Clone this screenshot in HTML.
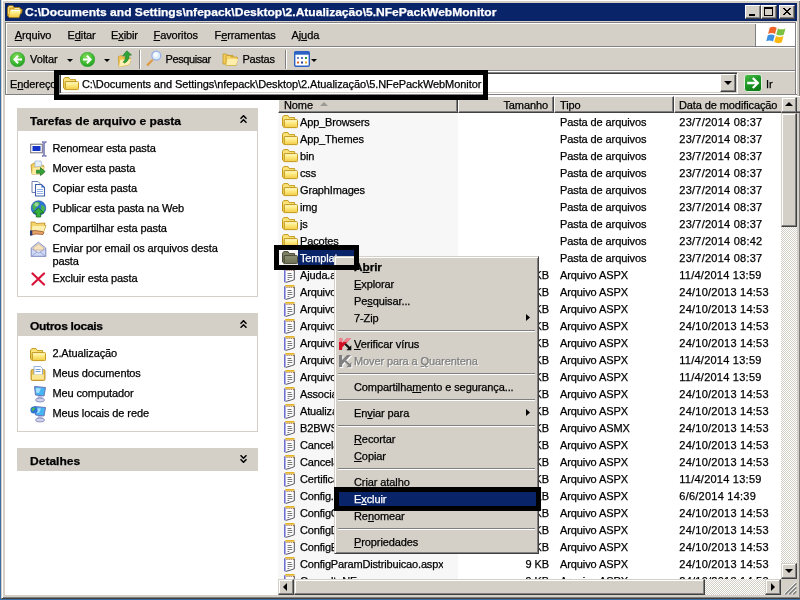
<!DOCTYPE html>
<html><head><meta charset="utf-8"><title>5.NFePackWebMonitor</title>
<style>
html,body{margin:0;padding:0}
body{width:800px;height:600px;overflow:hidden;background:#3a6ea5;position:relative;
 font-family:"Liberation Sans",sans-serif;font-size:11px;color:#000;letter-spacing:-0.1px;-webkit-text-stroke:0.25px}
div,span{box-sizing:border-box}
.a{position:absolute}
.t{position:absolute;white-space:nowrap;line-height:17px;height:17px}
u{text-decoration:underline;text-underline-offset:1px}
.face{background:#d4d0c8}
.btn{position:absolute;background:#d4d0c8;border:1px solid;border-color:#fff #404040 #404040 #fff;box-shadow:inset -1px -1px 0 #808080, inset 1px 1px 0 #d4d0c8}
.sbtn{position:absolute;background:#d4d0c8;border:1px solid;border-color:#d4d0c8 #404040 #404040 #d4d0c8;box-shadow:inset -1px -1px 0 #808080, inset 1px 1px 0 #fff}
.track{position:absolute;background:#eae8e3;background-image:conic-gradient(#fff 25%,#d4d0c8 0 50%,#fff 0 75%,#d4d0c8 0);background-size:2px 2px}
.hd{position:absolute;top:96px;height:17px;background:#d4d0c8;border:1px solid;border-color:#fff #404040 #404040 #fff;box-shadow:inset -1px -1px 0 #808080}
.hd span{position:absolute;top:0px;line-height:17px;white-space:nowrap}
.ph{position:absolute;left:17px;width:241px;height:23px;background:#d4d0c8;font-weight:bold}
.ph span{position:absolute;left:13px;top:5px;transform:scaleX(1.095);transform-origin:0 0;line-height:17px;white-space:nowrap;letter-spacing:0}
.pb{position:absolute;left:17px;width:241px;border:1px solid #d4d0c8;border-top:none;background:#fff}
.mi{position:absolute;left:3px;width:199px;height:17px;line-height:17px;white-space:nowrap;padding-left:16px}
.sep{position:absolute;left:3px;width:197px;height:2px;border-top:1px solid #808080;border-bottom:1px solid #fff}
.row{position:absolute;left:278px;width:503px;height:17px;line-height:17px;white-space:nowrap}
.row span{position:absolute;top:0}
.row svg{position:absolute}
.nm{left:22px;max-width:158px;overflow:hidden;letter-spacing:-0.16px}
.sz{right:232px;text-align:right}
.tp{left:282px}
.dt{left:401.3px;letter-spacing:0.24px}
</style></head>
<body>
<div id="w" class="a" style="left:0;top:0;width:800px;height:600px;will-change:transform">
<svg class="a" width="0" height="0" style="left:0;top:0"><defs><linearGradient id="fg" x1="0" y1="0" x2="0" y2="1"><stop offset="0" stop-color="#fffbd6"/><stop offset=".35" stop-color="#ffee8c"/><stop offset="1" stop-color="#f2cb45"/></linearGradient><linearGradient id="fgd" x1="0" y1="0" x2="0" y2="1"><stop offset="0" stop-color="#8f9274"/><stop offset="1" stop-color="#6c6f52"/></linearGradient><radialGradient id="gc" cx=".42" cy=".32" r=".75"><stop offset="0" stop-color="#86dc5e"/><stop offset=".6" stop-color="#3fba30"/><stop offset="1" stop-color="#1d9620"/></radialGradient></defs></svg>
<div class="a" style="left:1px;top:-1px;width:800px;height:600px;background:#d4d0c8;border:1px solid;border-color:#d4d0c8 #404040 #404040 #d4d0c8;box-shadow:inset 1px 1px 0 #fff, inset -1px -1px 0 #808080"></div>
<div class="a" style="left:5px;top:3px;width:792px;height:18px;background:#0a246a"></div>
<svg class="a" style="left:7px;top:5px" width="16" height="14" viewBox="0 0 16 14"><path d="M.6 3 L1.6 .8 L6 .8 L7.2 2.6 L12.8 2.6 L13.6 4 L15.2 4.6 L14.6 8.2 L13.4 8.6 L12 12.6 L2.2 12.6 L.6 10.6 Z" fill="#dda822" stroke="#b98a10" stroke-width=".7" stroke-linejoin="round"/><path d="M1.6 2 L1.6 9" stroke="#f7dc78" stroke-width="1.2"/><path d="M2 1.8 H5.8" stroke="#fff4c4" stroke-width="1"/><path d="M7.6 3.5 H12.4" stroke="#fff4c4" stroke-width=".9"/><path d="M3.6 4.8 L13.4 4.8 L13.2 8 L11.7 12 L2 12 L2.8 8 Z" fill="url(#fg)"/><path d="M4 5.3 H13" stroke="#fff" stroke-width="1" opacity=".9"/></svg>
<div class="t" style="left:25px;top:4px;color:#fff;font-weight:bold;letter-spacing:0;transform:scaleX(1.096);transform-origin:0 0" id="ttl">C:\Documents and Settings\nfepack\Desktop\2.Atualização\5.NFePackWebMonitor</div>
<div class="btn" style="left:745px;top:5px;width:16px;height:14px"><div class="a" style="left:3px;top:8px;width:6px;height:2px;background:#000"></div></div>
<div class="btn" style="left:761px;top:5px;width:16px;height:14px"><div class="a" style="left:2px;top:1px;width:9px;height:9px;border:1px solid #000;border-top-width:2px"></div></div>
<div class="btn" style="left:779px;top:5px;width:16px;height:14px"><svg class="a" style="left:3px;top:2px" width="8" height="7" viewBox="0 0 8 7"><path d="M0 0 L7 7 M1 0 L8 7 M7 0 L0 7 M8 0 L1 7" stroke="#000" stroke-width="1" shape-rendering="crispEdges" fill="none"/></svg></div>
<div class="a" style="left:5px;top:22px;width:792px;height:1px;background:#808080"></div>
<div class="a" style="left:5px;top:23px;width:792px;height:1px;background:#fff"></div>
<div class="a" style="left:5px;top:22px;width:1px;height:73px;background:#808080"></div>
<div class="a" style="left:6px;top:23px;width:1px;height:72px;background:#fff"></div>
<div class="a" style="left:795px;top:23px;width:1px;height:72px;background:#808080"></div>
<div class="a" style="left:796px;top:22px;width:1px;height:74px;background:#fff"></div>
<div class="a" style="left:7px;top:46px;width:788px;height:1px;background:#808080"></div>
<div class="a" style="left:7px;top:47px;width:788px;height:1px;background:#fff"></div>
<div class="a" style="left:7px;top:70px;width:788px;height:1px;background:#808080"></div>
<div class="a" style="left:7px;top:71px;width:788px;height:1px;background:#fff"></div>
<div class="a" style="left:5px;top:94px;width:792px;height:1px;background:#808080"></div>
<div class="a" style="left:5px;top:95px;width:792px;height:1px;background:#fff"></div>
<div class="t" style="left:14.7px;top:27px"><u>A</u>rquivo</div>
<div class="t" style="left:67.5px;top:27px">E<u>d</u>itar</div>
<div class="t" style="left:111px;top:27px">E<u>x</u>ibir</div>
<div class="t" style="left:153.5px;top:27px"><u>F</u>avoritos</div>
<div class="t" style="left:214.5px;top:27px">F<u>e</u>rramentas</div>
<div class="t" style="left:291.5px;top:27px">Aj<u>u</u>da</div>
<div class="a" style="left:755px;top:24px;width:1px;height:22px;background:#808080"></div>
<div class="a" style="left:756px;top:24px;width:39px;height:22px;background:#fff"></div>
<svg class="a" style="left:766px;top:25px" width="23" height="21" viewBox="0 0 22 20"><path d="M3.5 2.5 Q7 .5 10.2 2.6 L8.6 8.6 Q5.6 6.8 2 8.6 Z" fill="#f2652a"/><path d="M11.4 3.2 Q14.6 5 18.6 3.2 L17 9.2 Q13.4 10.8 9.8 9 Z" fill="#7cc142"/><path d="M1.7 9.8 Q5.2 8 8.3 9.9 L6.7 15.8 Q3.6 13.9 .2 15.6 Z" fill="#3d8fe0"/><path d="M9.5 10.4 Q13 12.3 16.7 10.5 L15.1 16.5 Q11.4 18.2 7.9 16.3 Z" fill="#fbb811"/></svg>
<svg class="a" style="left:10px;top:52px" width="15" height="15" viewBox="0 0 15 15"><circle cx="7.5" cy="7.5" r="7.3" fill="url(#gc)" stroke="#27a024" stroke-width=".5"/><path d="M3 7.5 L7.4 3.1 L8.8 4.5 L6.9 6.4 L12 6.4 L12 8.6 L6.9 8.6 L8.8 10.5 L7.4 11.9 Z" fill="#fff"/></svg>
<div class="t" style="left:30px;top:51px">Voltar</div>
<div class="a" style="left:67px;top:59px;width:0;height:0;border:3px solid transparent;border-top:3px solid #000;border-bottom:none"></div>
<svg class="a" style="left:79.5px;top:52px" width="15" height="15" viewBox="0 0 15 15"><circle cx="7.5" cy="7.5" r="7.3" fill="url(#gc)" stroke="#27a024" stroke-width=".5"/><path d="M3 7.5 L7.4 3.1 L8.8 4.5 L6.9 6.4 L12 6.4 L12 8.6 L6.9 8.6 L8.8 10.5 L7.4 11.9 Z" fill="#fff" transform="translate(15,0) scale(-1,1)"/></svg>
<div class="a" style="left:104px;top:59px;width:0;height:0;border:3px solid transparent;border-top:3px solid #000;border-bottom:none"></div>
<svg class="a" style="left:117px;top:50px" width="16" height="18" viewBox="0 0 16 18"><path d="M1.3 6.6 L4.6 5.4 L6 6.8 L13.6 8.2 L12.6 14.4 L2 17 Z" fill="#eec24f" stroke="#c99a2b" stroke-width=".7"/><path d="M3.4 9.8 L14 9 L12.4 14.6 L2 17 Z" fill="#fdf0b2"/><path d="M9.8 .8 L14.6 5 L12 5.2 Q12.4 10.5 7.6 13 L6.2 12.2 Q9 9.5 8.4 5.6 L5.6 5.9 Z" fill="#2fa336" stroke="#1f7a27" stroke-width=".6"/></svg>
<div class="a" style="left:139px;top:50px;width:1px;height:19px;background:#808080"></div><div class="a" style="left:140px;top:50px;width:1px;height:19px;background:#fff"></div>
<svg class="a" style="left:145px;top:50px" width="17" height="18" viewBox="0 0 17 18"><path d="M7.2 10.3 L2.6 14.9" stroke="#e09a45" stroke-width="2.2" stroke-linecap="round"/><circle cx="11.3" cy="5.6" r="4.5" fill="#d9edfb" stroke="#9db0e6" stroke-width="1.3"/><circle cx="10.6" cy="4.8" r="2.2" fill="#fff" opacity=".85"/></svg>
<div class="t" style="left:165.5px;top:51px;letter-spacing:-0.4px">Pesquisar</div>
<svg class="a" style="left:222px;top:51px" width="17" height="16" viewBox="0 0 17 16"><path d="M1 3 L4.5 3 L5.5 4.4 L11 4.4 L11 13 L1 13 Z" fill="#f2cd59" stroke="#c3972b" stroke-width=".8"/><path d="M4 5.5 Q4 4.5 5 4.5 L8 4.5 L9 6 L15 6 L15.5 7 L14 14.5 L4 14.5 Z" fill="#f6d669" stroke="#c3972b" stroke-width=".8"/><path d="M5.5 8 L16 8 L14 14.2 L4.2 14.2 Z" fill="#fdefab"/></svg>
<div class="t" style="left:242.5px;top:51px;letter-spacing:-0.25px">Pastas</div>
<div class="a" style="left:285px;top:50px;width:1px;height:19px;background:#808080"></div><div class="a" style="left:286px;top:50px;width:1px;height:19px;background:#fff"></div>
<svg class="a" style="left:294px;top:51px" width="16" height="16" viewBox="0 0 16 16"><rect x=".7" y=".7" width="14.6" height="14.6" rx="1.2" fill="#fff" stroke="#2d62c4" stroke-width="1.4"/><rect x=".7" y=".7" width="14.6" height="3" fill="#2d62c4"/><rect x="3" y="6" width="2" height="2" fill="#7a86c8"/><rect x="7" y="6" width="2" height="2" fill="#5a6ab8"/><rect x="11" y="6" width="2" height="2" fill="#2e9a38"/><rect x="3" y="10.5" width="2" height="2" fill="#e0662c"/><rect x="7" y="10.5" width="2" height="2" fill="#2c3e96"/><rect x="11" y="10.5" width="2" height="2" fill="#e0a82c"/></svg>
<div class="a" style="left:311px;top:59px;width:0;height:0;border:3px solid transparent;border-top:3px solid #000;border-bottom:none"></div>
<div class="t" style="left:10px;top:76px">E<u>n</u>dereço</div>
<div class="a" style="left:59px;top:72px;width:679px;height:22px;background:#fff;border:1px solid;border-color:#808080 #fff #fff #808080;box-shadow:inset 1px 1px 0 #404040, inset -1px -1px 0 #d4d0c8"></div>
<svg class="a" style="left:62.8px;top:77px" width="16" height="14" viewBox="0 0 16 14"><path d="M.5 2.2 L1.8 .6 L6 .6 L7.3 2.6 L12.6 2.6 L12.6 4.6 L2.3 4.6 L2.3 12.6 L.5 11 Z" fill="#fbe37a" stroke="#c39a1c" stroke-width="1" stroke-linejoin="round"/><rect x="2.3" y="4.6" width="13.2" height="8" rx=".9" fill="url(#fg)" stroke="#c39a1c" stroke-width="1"/></svg>
<div class="t" style="left:82px;top:76px;letter-spacing:-0.07px" id="addr">C:\Documents and Settings\nfepack\Desktop\2.Atualização\5.NFePackWebMonitor</div>
<div class="btn" style="left:720px;top:74px;width:16px;height:18px"><div class="a" style="left:3px;top:6px;width:0;height:0;border:4px solid transparent;border-top:4px solid #000;border-bottom:none"></div></div>
<svg class="a" style="left:744px;top:74px" width="18" height="18" viewBox="0 0 18 18"><defs><linearGradient id="go" x1="0" y1="0" x2=".6" y2="1"><stop offset="0" stop-color="#4fbf48"/><stop offset=".5" stop-color="#1f9a28"/><stop offset="1" stop-color="#0c7a16"/></linearGradient></defs><rect x=".5" y=".5" width="17" height="17" rx="2.6" fill="url(#go)" stroke="#e4eede" stroke-width="1"/><path d="M3.2 9 L13.6 9 M8.8 4 L13.8 9 L8.8 14" stroke="#fff" stroke-width="2.3" fill="none"/></svg>
<div class="t" style="left:766px;top:76px">Ir</div>
<div class="a" style="left:5px;top:96px;width:792px;height:499px;background:#fff"></div>
<div class="ph" style="top:108px"><span>Tarefas de arquivo e pasta</span></div>
<svg class="a" style="left:240px;top:115px" width="7" height="8" viewBox="0 0 7 8"><path d="M.5 3.7 L3.5 .7 L6.5 3.7 M.5 7.7 L3.5 4.7 L6.5 7.7" stroke="#000" stroke-width="1.5" fill="none"/></svg>
<div class="pb" style="top:131px;height:166px"></div>
<div class="ph" style="top:313px"><span style="letter-spacing:-0.3px">Outros locais</span></div>
<svg class="a" style="left:240px;top:320px" width="7" height="8" viewBox="0 0 7 8"><path d="M.5 3.7 L3.5 .7 L6.5 3.7 M.5 7.7 L3.5 4.7 L6.5 7.7" stroke="#000" stroke-width="1.5" fill="none"/></svg>
<div class="pb" style="top:336px;height:96px"></div>
<div class="ph" style="top:448px"><span>Detalhes</span></div>
<svg class="a" style="left:240px;top:455px" width="7" height="8" viewBox="0 0 7 8"><path d="M.5 .3 L3.5 3.3 L6.5 .3 M.5 4.3 L3.5 7.3 L6.5 4.3" stroke="#000" stroke-width="1.5" fill="none"/></svg>
<div class="t" style="left:52.4px;top:140px">Renomear esta pasta</div>
<div class="t" style="left:52.4px;top:160px">Mover esta pasta</div>
<div class="t" style="left:52.4px;top:180px">Copiar esta pasta</div>
<div class="t" style="left:52.4px;top:200px">Publicar esta pasta na Web</div>
<div class="t" style="left:52.4px;top:220px">Compartilhar esta pasta</div>
<div class="t" style="left:52.4px;top:240px">Enviar por email os arquivos desta</div>
<div class="t" style="left:52.4px;top:253px">pasta</div>
<div class="t" style="left:52.4px;top:270px">Excluir esta pasta</div>
<div class="t" style="left:52.4px;top:345px">2.Atualização</div>
<div class="t" style="left:52.4px;top:365px">Meus documentos</div>
<div class="t" style="left:52.4px;top:385px">Meu computador</div>
<div class="t" style="left:52.4px;top:405px">Meus locais de rede</div>
<svg class="a" style="left:30px;top:141px" width="17" height="16" viewBox="0 0 17 16"><rect x=".7" y="3.2" width="11.6" height="8.6" fill="#fff" stroke="#6b6b7a" stroke-width="1"/><rect x="2.5" y="5" width="8" height="5" fill="#1433c8"/><path d="M12 1 Q14 1 14 2.5 L14 13.5 Q14 15 12 15 M16.5 1 Q14 1 14 2.5 M16.5 15 Q14 15 14 13.5" stroke="#8587bd" stroke-width="1.8" fill="none"/></svg>
<svg class="a" style="left:30px;top:160px" width="17" height="17" viewBox="0 0 17 17"><path d="M1 5 L4 3 L8 3 L14 6 L13 14 L2 14 Z" fill="#f2cf62" stroke="#b88d25" stroke-width=".8"/><path d="M5 1 L11 1 L12 6 L5 7 Z" fill="#e6f0fb" stroke="#9db6d6" stroke-width=".7"/><path d="M3 8 L14 7 L12.5 14 L2 14 Z" fill="#fdeca0"/><path d="M6.5 10.2 L10.5 10.2 L10.5 7.6 L15.2 11.6 L10.5 15.6 L10.5 13.2 L6.5 13.2 Z" fill="#35a43a" stroke="#1d6f24" stroke-width=".7"/></svg>
<svg class="a" style="left:31px;top:180px" width="15" height="17" viewBox="0 0 15 17"><path d="M1 1.5 L7 1.5 L9.5 4 L9.5 12.5 L1 12.5 Z" fill="#fff" stroke="#6f7fae" stroke-width="1"/><path d="M4.5 4.5 L10.5 4.5 L13.5 7.5 L13.5 16 L4.5 16 Z" fill="#fff" stroke="#3f5fa8" stroke-width="1.1"/><path d="M10.5 4.5 L13.5 7.5 L10.5 7.5 Z" fill="#3765c4"/><path d="M6 9.5h6M6 11.5h6M6 13.5h6" stroke="#8fb0e6" stroke-width="1"/></svg>
<svg class="a" style="left:30px;top:200px" width="17" height="18" viewBox="0 0 17 18"><circle cx="8.5" cy="8" r="7.3" fill="#2d73d8" stroke="#1c4f9e" stroke-width=".6"/><path d="M3 4 Q6 1 9 2 Q11 4 8 6 Q5 8 4 11 Q1.5 8 3 4Z" fill="#49b54a"/><path d="M11 5 Q14 5 15 8 Q14.5 12 12 13 Q11 9 11 5Z" fill="#49b54a"/><circle cx="6.5" cy="4.5" r="2" fill="#fff" opacity=".45"/><path d="M8.5 8 L14 13 L10.7 13 L10.7 17 L6.3 17 L6.3 13 L3 13 Z" fill="#35b23a" stroke="#176a20" stroke-width=".8"/></svg>
<svg class="a" style="left:29px;top:220px" width="18" height="17" viewBox="0 0 18 17"><path d="M2 2 L6 2 L7 3.5 L16 3 L15.5 5 L17 5.5 L14.5 12 L2 12 Z" fill="#f4d46a" stroke="#b88d25" stroke-width=".8"/><path d="M3.5 6 L16.5 6 L14.5 11.6 L2.4 11.6 Z" fill="#fdf0b0"/><path d="M1.5 11 L6 10.5 L13 11.5 L15 12.5 L14 14.5 L7 14 L1.5 15 Z" fill="#e9a268" stroke="#8a4d22" stroke-width=".7"/><rect x="1" y="10.5" width="2.3" height="5" fill="#283a6e"/></svg>
<svg class="a" style="left:30px;top:240.5px" width="17" height="17" viewBox="0 0 17 17"><path d="M1.2 7 L8.5 1.2 L15.8 7 L15.8 15.5 L1.2 15.5 Z" fill="#dfe6f8" stroke="#8a93c4" stroke-width="1"/><path d="M3.5 6.5 L8.5 3 L13.5 6.5 L13.5 9 L3.5 9Z" fill="#f6e3c2" stroke="#c9a36c" stroke-width=".6"/><path d="M1.5 7.5 L8.5 12 L15.5 7.5 L15.5 15.2 L1.5 15.2 Z" fill="#cfd9f5" stroke="#8a93c4" stroke-width=".7"/><path d="M1.5 15.2 L7 11 M15.5 15.2 L10 11" stroke="#8a93c4" stroke-width=".7"/></svg>
<svg class="a" style="left:31px;top:272px" width="15" height="14" viewBox="0 0 15 14"><path d="M1.5 1.5 L13 12.5 M13 1.5 L1.5 12.5" stroke="#d8143a" stroke-width="2.2" stroke-linecap="round"/></svg>
<svg class="a" style="left:30px;top:347.5px" width="16" height="14" viewBox="0 0 16 14"><path d="M.5 2.2 L1.8 .6 L6 .6 L7.3 2.6 L12.6 2.6 L12.6 4.6 L2.3 4.6 L2.3 12.6 L.5 11 Z" fill="#fbe37a" stroke="#c39a1c" stroke-width="1" stroke-linejoin="round"/><rect x="2.3" y="4.6" width="13.2" height="8" rx=".9" fill="url(#fg)" stroke="#c39a1c" stroke-width="1"/></svg>
<svg class="a" style="left:30px;top:365px" width="16" height="17" viewBox="0 0 16 17"><path d="M1 6 Q1 4.5 2.5 4.5 L13.5 4.5 Q15 4.5 15 6 L15 14 Q15 15.5 13.5 15.5 L2.5 15.5 Q1 15.5 1 14 Z" fill="#ecbf45" stroke="#b88d25" stroke-width=".9"/><path d="M4 1.5 L10.5 1.5 L12.5 3.5 L12.5 10 L4 10 Z" fill="#fff" stroke="#7aa0d8" stroke-width=".8"/><path d="M5.5 4.5h5M5.5 6.5h5" stroke="#7aa0d8" stroke-width="1"/><path d="M2 9.5 L14 9.5 L14 14.5 L2 14.5 Z" fill="#fbe694"/></svg>
<svg class="a" style="left:29.5px;top:385px" width="17" height="18" viewBox="0 0 17 18"><path d="M4.5 1.5 L15.5 2.5 L14 11 L5.5 10 Z" fill="#44b4f2" stroke="#6a74b8" stroke-width="1"/><path d="M6 3 L11 3.4 L9 8 L6.2 7.8Z" fill="#bfe8ff" opacity=".8"/><path d="M8 11 L12 11 L13 14 L7 14Z" fill="#b9bfe0"/><ellipse cx="10" cy="15" rx="4.5" ry="2" fill="#cfd3ec" stroke="#7a80b8" stroke-width=".8"/></svg>
<svg class="a" style="left:29.5px;top:404.5px" width="17" height="18" viewBox="0 0 17 18"><path d="M4.5 1.5 L15.5 2.5 L14 11 L5.5 10 Z" fill="#44b4f2" stroke="#6a74b8" stroke-width="1"/><path d="M6 3 L11 3.4 L9 8 L6.2 7.8Z" fill="#bfe8ff" opacity=".8"/><path d="M8 11 L12 11 L13 14 L7 14Z" fill="#b9bfe0"/><ellipse cx="10" cy="15" rx="4.5" ry="2" fill="#cfd3ec" stroke="#7a80b8" stroke-width=".8"/><circle cx="4" cy="5" r="3.6" fill="#2d73d8"/><path d="M1.5 4 Q3.5 1.5 5.5 3 Q4.5 5.5 2.5 6.5Z" fill="#4db84e"/></svg>
<div class="a" style="left:278px;top:113px;width:180px;height:466px;background:#f7f7f7"></div>
<div class="hd" style="left:278px;width:180px"><span style="left:5px">Nome</span></div>
<div class="hd" style="left:458px;width:96px"><span style="right:5px">Tamanho</span></div>
<div class="hd" style="left:554px;width:120px"><span style="left:5px">Tipo</span></div>
<div class="hd" style="left:674px;width:130px"><span style="left:4px">Data de modificação</span></div>
<div class="a" style="left:320px;top:102px;width:0;height:0;border:4px solid transparent;border-bottom:4px solid #9c9a94;border-top:none"></div>
<div class="a" style="left:278px;top:113px;width:503px;height:466px;overflow:hidden">
<div class="row" style="left:0;top:1px"><svg class="a" style="left:4px;top:1px" width="16" height="14" viewBox="0 0 16 14"><path d="M.5 2.2 L1.8 .6 L6 .6 L7.3 2.6 L12.6 2.6 L12.6 4.6 L2.3 4.6 L2.3 12.6 L.5 11 Z" fill="#fbe37a" stroke="#c39a1c" stroke-width="1" stroke-linejoin="round"/><rect x="2.3" y="4.6" width="13.2" height="8" rx=".9" fill="url(#fg)" stroke="#c39a1c" stroke-width="1"/></svg><span class="nm">App_Browsers</span><span class="sz"></span><span class="tp">Pasta de arquivos</span><span class="dt">23/7/2014 08:37</span></div>
<div class="row" style="left:0;top:18px"><svg class="a" style="left:4px;top:1px" width="16" height="14" viewBox="0 0 16 14"><path d="M.5 2.2 L1.8 .6 L6 .6 L7.3 2.6 L12.6 2.6 L12.6 4.6 L2.3 4.6 L2.3 12.6 L.5 11 Z" fill="#fbe37a" stroke="#c39a1c" stroke-width="1" stroke-linejoin="round"/><rect x="2.3" y="4.6" width="13.2" height="8" rx=".9" fill="url(#fg)" stroke="#c39a1c" stroke-width="1"/></svg><span class="nm">App_Themes</span><span class="sz"></span><span class="tp">Pasta de arquivos</span><span class="dt">23/7/2014 08:37</span></div>
<div class="row" style="left:0;top:35px"><svg class="a" style="left:4px;top:1px" width="16" height="14" viewBox="0 0 16 14"><path d="M.5 2.2 L1.8 .6 L6 .6 L7.3 2.6 L12.6 2.6 L12.6 4.6 L2.3 4.6 L2.3 12.6 L.5 11 Z" fill="#fbe37a" stroke="#c39a1c" stroke-width="1" stroke-linejoin="round"/><rect x="2.3" y="4.6" width="13.2" height="8" rx=".9" fill="url(#fg)" stroke="#c39a1c" stroke-width="1"/></svg><span class="nm">bin</span><span class="sz"></span><span class="tp">Pasta de arquivos</span><span class="dt">23/7/2014 08:37</span></div>
<div class="row" style="left:0;top:52px"><svg class="a" style="left:4px;top:1px" width="16" height="14" viewBox="0 0 16 14"><path d="M.5 2.2 L1.8 .6 L6 .6 L7.3 2.6 L12.6 2.6 L12.6 4.6 L2.3 4.6 L2.3 12.6 L.5 11 Z" fill="#fbe37a" stroke="#c39a1c" stroke-width="1" stroke-linejoin="round"/><rect x="2.3" y="4.6" width="13.2" height="8" rx=".9" fill="url(#fg)" stroke="#c39a1c" stroke-width="1"/></svg><span class="nm">css</span><span class="sz"></span><span class="tp">Pasta de arquivos</span><span class="dt">23/7/2014 08:37</span></div>
<div class="row" style="left:0;top:69px"><svg class="a" style="left:4px;top:1px" width="16" height="14" viewBox="0 0 16 14"><path d="M.5 2.2 L1.8 .6 L6 .6 L7.3 2.6 L12.6 2.6 L12.6 4.6 L2.3 4.6 L2.3 12.6 L.5 11 Z" fill="#fbe37a" stroke="#c39a1c" stroke-width="1" stroke-linejoin="round"/><rect x="2.3" y="4.6" width="13.2" height="8" rx=".9" fill="url(#fg)" stroke="#c39a1c" stroke-width="1"/></svg><span class="nm">GraphImages</span><span class="sz"></span><span class="tp">Pasta de arquivos</span><span class="dt">23/7/2014 08:37</span></div>
<div class="row" style="left:0;top:86px"><svg class="a" style="left:4px;top:1px" width="16" height="14" viewBox="0 0 16 14"><path d="M.5 2.2 L1.8 .6 L6 .6 L7.3 2.6 L12.6 2.6 L12.6 4.6 L2.3 4.6 L2.3 12.6 L.5 11 Z" fill="#fbe37a" stroke="#c39a1c" stroke-width="1" stroke-linejoin="round"/><rect x="2.3" y="4.6" width="13.2" height="8" rx=".9" fill="url(#fg)" stroke="#c39a1c" stroke-width="1"/></svg><span class="nm">img</span><span class="sz"></span><span class="tp">Pasta de arquivos</span><span class="dt">23/7/2014 08:37</span></div>
<div class="row" style="left:0;top:103px"><svg class="a" style="left:4px;top:1px" width="16" height="14" viewBox="0 0 16 14"><path d="M.5 2.2 L1.8 .6 L6 .6 L7.3 2.6 L12.6 2.6 L12.6 4.6 L2.3 4.6 L2.3 12.6 L.5 11 Z" fill="#fbe37a" stroke="#c39a1c" stroke-width="1" stroke-linejoin="round"/><rect x="2.3" y="4.6" width="13.2" height="8" rx=".9" fill="url(#fg)" stroke="#c39a1c" stroke-width="1"/></svg><span class="nm">js</span><span class="sz"></span><span class="tp">Pasta de arquivos</span><span class="dt">23/7/2014 08:37</span></div>
<div class="row" style="left:0;top:120px"><svg class="a" style="left:4px;top:1px" width="16" height="14" viewBox="0 0 16 14"><path d="M.5 2.2 L1.8 .6 L6 .6 L7.3 2.6 L12.6 2.6 L12.6 4.6 L2.3 4.6 L2.3 12.6 L.5 11 Z" fill="#fbe37a" stroke="#c39a1c" stroke-width="1" stroke-linejoin="round"/><rect x="2.3" y="4.6" width="13.2" height="8" rx=".9" fill="url(#fg)" stroke="#c39a1c" stroke-width="1"/></svg><span class="nm">Pacotes</span><span class="sz"></span><span class="tp">Pasta de arquivos</span><span class="dt">23/7/2014 08:42</span></div>
<div class="row" style="left:0;top:137px"><svg class="a" style="left:4px;top:1px" width="16" height="14" viewBox="0 0 16 14"><path d="M.5 2.2 L1.8 .6 L6 .6 L7.3 2.6 L12.6 2.6 L12.6 4.6 L2.3 4.6 L2.3 12.6 L.5 11 Z" fill="#7d8064" stroke="#4a4c38" stroke-width="1" stroke-linejoin="round"/><rect x="2.3" y="4.6" width="13.2" height="8" rx=".9" fill="url(#fgd)" stroke="#4a4c38" stroke-width="1"/></svg><span class="a" style="left:20px;top:0;width:58px;height:16px;background:#0a246a"></span><span class="nm" style="color:#fff">Templates</span><span class="sz"></span><span class="tp">Pasta de arquivos</span><span class="dt">23/7/2014 08:37</span></div>
<div class="row" style="left:0;top:154px"><svg class="a" style="left:6px;top:1px" width="12" height="15" viewBox="0 0 12 15"><path d="M1 1.5 L10 1.5 L10 11.6 L7.5 12.5 L5 13.3 L2.5 14.2 L1 14.2 Z" fill="#fff"/><path d="M10.3 1.8 L10.3 11.7 L7.8 12.6 L5 13.5 L1.6 14.4" stroke="#50505c" fill="none" stroke-width="1"/><path d="M.8 1.2 V14.2" stroke="#6868d0" stroke-width="1.5"/><rect x="1.3" y="0" width="9.2" height="1.7" fill="#e3b524"/><path d="M2.5 2.4h1M4.6 2.4h1M6.7 2.4h1M8.8 2.4h1" stroke="#8a4a2a" stroke-width="1"/><path d="M3.5 5.5h4M3.5 7.5h4.8M3.5 9.5h4.8M3.5 11.5h1.8" stroke="#7a7a7a" stroke-width="1"/></svg><span class="nm">Ajuda.aspx</span><span class="sz">2 KB</span><span class="tp">Arquivo ASPX</span><span class="dt">11/4/2014 13:59</span></div>
<div class="row" style="left:0;top:171px"><svg class="a" style="left:6px;top:1px" width="12" height="15" viewBox="0 0 12 15"><path d="M1 1.5 L10 1.5 L10 11.6 L7.5 12.5 L5 13.3 L2.5 14.2 L1 14.2 Z" fill="#fff"/><path d="M10.3 1.8 L10.3 11.7 L7.8 12.6 L5 13.5 L1.6 14.4" stroke="#50505c" fill="none" stroke-width="1"/><path d="M.8 1.2 V14.2" stroke="#6868d0" stroke-width="1.5"/><rect x="1.3" y="0" width="9.2" height="1.7" fill="#e3b524"/><path d="M2.5 2.4h1M4.6 2.4h1M6.7 2.4h1M8.8 2.4h1" stroke="#8a4a2a" stroke-width="1"/><path d="M3.5 5.5h4M3.5 7.5h4.8M3.5 9.5h4.8M3.5 11.5h1.8" stroke="#7a7a7a" stroke-width="1"/></svg><span class="nm">ArquivoDownload.aspx</span><span class="sz">1 KB</span><span class="tp">Arquivo ASPX</span><span class="dt">24/10/2013 14:53</span></div>
<div class="row" style="left:0;top:188px"><svg class="a" style="left:6px;top:1px" width="12" height="15" viewBox="0 0 12 15"><path d="M1 1.5 L10 1.5 L10 11.6 L7.5 12.5 L5 13.3 L2.5 14.2 L1 14.2 Z" fill="#fff"/><path d="M10.3 1.8 L10.3 11.7 L7.8 12.6 L5 13.5 L1.6 14.4" stroke="#50505c" fill="none" stroke-width="1"/><path d="M.8 1.2 V14.2" stroke="#6868d0" stroke-width="1.5"/><rect x="1.3" y="0" width="9.2" height="1.7" fill="#e3b524"/><path d="M2.5 2.4h1M4.6 2.4h1M6.7 2.4h1M8.8 2.4h1" stroke="#8a4a2a" stroke-width="1"/><path d="M3.5 5.5h4M3.5 7.5h4.8M3.5 9.5h4.8M3.5 11.5h1.8" stroke="#7a7a7a" stroke-width="1"/></svg><span class="nm">ArquivoLog.aspx</span><span class="sz">4 KB</span><span class="tp">Arquivo ASPX</span><span class="dt">24/10/2013 14:53</span></div>
<div class="row" style="left:0;top:205px"><svg class="a" style="left:6px;top:1px" width="12" height="15" viewBox="0 0 12 15"><path d="M1 1.5 L10 1.5 L10 11.6 L7.5 12.5 L5 13.3 L2.5 14.2 L1 14.2 Z" fill="#fff"/><path d="M10.3 1.8 L10.3 11.7 L7.8 12.6 L5 13.5 L1.6 14.4" stroke="#50505c" fill="none" stroke-width="1"/><path d="M.8 1.2 V14.2" stroke="#6868d0" stroke-width="1.5"/><rect x="1.3" y="0" width="9.2" height="1.7" fill="#e3b524"/><path d="M2.5 2.4h1M4.6 2.4h1M6.7 2.4h1M8.8 2.4h1" stroke="#8a4a2a" stroke-width="1"/><path d="M3.5 5.5h4M3.5 7.5h4.8M3.5 9.5h4.8M3.5 11.5h1.8" stroke="#7a7a7a" stroke-width="1"/></svg><span class="nm">ArquivoPdf.aspx</span><span class="sz">1 KB</span><span class="tp">Arquivo ASPX</span><span class="dt">24/10/2013 14:53</span></div>
<div class="row" style="left:0;top:222px"><svg class="a" style="left:6px;top:1px" width="12" height="15" viewBox="0 0 12 15"><path d="M1 1.5 L10 1.5 L10 11.6 L7.5 12.5 L5 13.3 L2.5 14.2 L1 14.2 Z" fill="#fff"/><path d="M10.3 1.8 L10.3 11.7 L7.8 12.6 L5 13.5 L1.6 14.4" stroke="#50505c" fill="none" stroke-width="1"/><path d="M.8 1.2 V14.2" stroke="#6868d0" stroke-width="1.5"/><rect x="1.3" y="0" width="9.2" height="1.7" fill="#e3b524"/><path d="M2.5 2.4h1M4.6 2.4h1M6.7 2.4h1M8.8 2.4h1" stroke="#8a4a2a" stroke-width="1"/><path d="M3.5 5.5h4M3.5 7.5h4.8M3.5 9.5h4.8M3.5 11.5h1.8" stroke="#7a7a7a" stroke-width="1"/></svg><span class="nm">ArquivoTxt.aspx</span><span class="sz">1 KB</span><span class="tp">Arquivo ASPX</span><span class="dt">24/10/2013 14:53</span></div>
<div class="row" style="left:0;top:239px"><svg class="a" style="left:6px;top:1px" width="12" height="15" viewBox="0 0 12 15"><path d="M1 1.5 L10 1.5 L10 11.6 L7.5 12.5 L5 13.3 L2.5 14.2 L1 14.2 Z" fill="#fff"/><path d="M10.3 1.8 L10.3 11.7 L7.8 12.6 L5 13.5 L1.6 14.4" stroke="#50505c" fill="none" stroke-width="1"/><path d="M.8 1.2 V14.2" stroke="#6868d0" stroke-width="1.5"/><rect x="1.3" y="0" width="9.2" height="1.7" fill="#e3b524"/><path d="M2.5 2.4h1M4.6 2.4h1M6.7 2.4h1M8.8 2.4h1" stroke="#8a4a2a" stroke-width="1"/><path d="M3.5 5.5h4M3.5 7.5h4.8M3.5 9.5h4.8M3.5 11.5h1.8" stroke="#7a7a7a" stroke-width="1"/></svg><span class="nm">ArquivoXml.aspx</span><span class="sz">1 KB</span><span class="tp">Arquivo ASPX</span><span class="dt">11/4/2014 13:59</span></div>
<div class="row" style="left:0;top:256px"><svg class="a" style="left:6px;top:1px" width="12" height="15" viewBox="0 0 12 15"><path d="M1 1.5 L10 1.5 L10 11.6 L7.5 12.5 L5 13.3 L2.5 14.2 L1 14.2 Z" fill="#fff"/><path d="M10.3 1.8 L10.3 11.7 L7.8 12.6 L5 13.5 L1.6 14.4" stroke="#50505c" fill="none" stroke-width="1"/><path d="M.8 1.2 V14.2" stroke="#6868d0" stroke-width="1.5"/><rect x="1.3" y="0" width="9.2" height="1.7" fill="#e3b524"/><path d="M2.5 2.4h1M4.6 2.4h1M6.7 2.4h1M8.8 2.4h1" stroke="#8a4a2a" stroke-width="1"/><path d="M3.5 5.5h4M3.5 7.5h4.8M3.5 9.5h4.8M3.5 11.5h1.8" stroke="#7a7a7a" stroke-width="1"/></svg><span class="nm">ArquivoZip.aspx</span><span class="sz">1 KB</span><span class="tp">Arquivo ASPX</span><span class="dt">11/4/2014 13:59</span></div>
<div class="row" style="left:0;top:273px"><svg class="a" style="left:6px;top:1px" width="12" height="15" viewBox="0 0 12 15"><path d="M1 1.5 L10 1.5 L10 11.6 L7.5 12.5 L5 13.3 L2.5 14.2 L1 14.2 Z" fill="#fff"/><path d="M10.3 1.8 L10.3 11.7 L7.8 12.6 L5 13.5 L1.6 14.4" stroke="#50505c" fill="none" stroke-width="1"/><path d="M.8 1.2 V14.2" stroke="#6868d0" stroke-width="1.5"/><rect x="1.3" y="0" width="9.2" height="1.7" fill="#e3b524"/><path d="M2.5 2.4h1M4.6 2.4h1M6.7 2.4h1M8.8 2.4h1" stroke="#8a4a2a" stroke-width="1"/><path d="M3.5 5.5h4M3.5 7.5h4.8M3.5 9.5h4.8M3.5 11.5h1.8" stroke="#7a7a7a" stroke-width="1"/></svg><span class="nm">AssociaCertificado.aspx</span><span class="sz">7 KB</span><span class="tp">Arquivo ASPX</span><span class="dt">24/10/2013 14:53</span></div>
<div class="row" style="left:0;top:290px"><svg class="a" style="left:6px;top:1px" width="12" height="15" viewBox="0 0 12 15"><path d="M1 1.5 L10 1.5 L10 11.6 L7.5 12.5 L5 13.3 L2.5 14.2 L1 14.2 Z" fill="#fff"/><path d="M10.3 1.8 L10.3 11.7 L7.8 12.6 L5 13.5 L1.6 14.4" stroke="#50505c" fill="none" stroke-width="1"/><path d="M.8 1.2 V14.2" stroke="#6868d0" stroke-width="1.5"/><rect x="1.3" y="0" width="9.2" height="1.7" fill="#e3b524"/><path d="M2.5 2.4h1M4.6 2.4h1M6.7 2.4h1M8.8 2.4h1" stroke="#8a4a2a" stroke-width="1"/><path d="M3.5 5.5h4M3.5 7.5h4.8M3.5 9.5h4.8M3.5 11.5h1.8" stroke="#7a7a7a" stroke-width="1"/></svg><span class="nm">AtualizaStatus.aspx</span><span class="sz">3 KB</span><span class="tp">Arquivo ASPX</span><span class="dt">24/10/2013 14:53</span></div>
<div class="row" style="left:0;top:307px"><svg class="a" style="left:6px;top:1px" width="12" height="15" viewBox="0 0 12 15"><path d="M1 1.5 L10 1.5 L10 11.6 L7.5 12.5 L5 13.3 L2.5 14.2 L1 14.2 Z" fill="#fff"/><path d="M10.3 1.8 L10.3 11.7 L7.8 12.6 L5 13.5 L1.6 14.4" stroke="#50505c" fill="none" stroke-width="1"/><path d="M.8 1.2 V14.2" stroke="#6868d0" stroke-width="1.5"/><rect x="1.3" y="0" width="9.2" height="1.7" fill="#e3b524"/><path d="M2.5 2.4h1M4.6 2.4h1M6.7 2.4h1M8.8 2.4h1" stroke="#8a4a2a" stroke-width="1"/><path d="M3.5 5.5h4M3.5 7.5h4.8M3.5 9.5h4.8M3.5 11.5h1.8" stroke="#7a7a7a" stroke-width="1"/></svg><span class="nm">B2BWS.asmx</span><span class="sz">1 KB</span><span class="tp">Arquivo ASMX</span><span class="dt">24/10/2013 14:53</span></div>
<div class="row" style="left:0;top:324px"><svg class="a" style="left:6px;top:1px" width="12" height="15" viewBox="0 0 12 15"><path d="M1 1.5 L10 1.5 L10 11.6 L7.5 12.5 L5 13.3 L2.5 14.2 L1 14.2 Z" fill="#fff"/><path d="M10.3 1.8 L10.3 11.7 L7.8 12.6 L5 13.5 L1.6 14.4" stroke="#50505c" fill="none" stroke-width="1"/><path d="M.8 1.2 V14.2" stroke="#6868d0" stroke-width="1.5"/><rect x="1.3" y="0" width="9.2" height="1.7" fill="#e3b524"/><path d="M2.5 2.4h1M4.6 2.4h1M6.7 2.4h1M8.8 2.4h1" stroke="#8a4a2a" stroke-width="1"/><path d="M3.5 5.5h4M3.5 7.5h4.8M3.5 9.5h4.8M3.5 11.5h1.8" stroke="#7a7a7a" stroke-width="1"/></svg><span class="nm">CancelaNFe.aspx</span><span class="sz">9 KB</span><span class="tp">Arquivo ASPX</span><span class="dt">24/10/2013 14:53</span></div>
<div class="row" style="left:0;top:341px"><svg class="a" style="left:6px;top:1px" width="12" height="15" viewBox="0 0 12 15"><path d="M1 1.5 L10 1.5 L10 11.6 L7.5 12.5 L5 13.3 L2.5 14.2 L1 14.2 Z" fill="#fff"/><path d="M10.3 1.8 L10.3 11.7 L7.8 12.6 L5 13.5 L1.6 14.4" stroke="#50505c" fill="none" stroke-width="1"/><path d="M.8 1.2 V14.2" stroke="#6868d0" stroke-width="1.5"/><rect x="1.3" y="0" width="9.2" height="1.7" fill="#e3b524"/><path d="M2.5 2.4h1M4.6 2.4h1M6.7 2.4h1M8.8 2.4h1" stroke="#8a4a2a" stroke-width="1"/><path d="M3.5 5.5h4M3.5 7.5h4.8M3.5 9.5h4.8M3.5 11.5h1.8" stroke="#7a7a7a" stroke-width="1"/></svg><span class="nm">CancelaNFeLote.aspx</span><span class="sz">8 KB</span><span class="tp">Arquivo ASPX</span><span class="dt">24/10/2013 14:53</span></div>
<div class="row" style="left:0;top:358px"><svg class="a" style="left:6px;top:1px" width="12" height="15" viewBox="0 0 12 15"><path d="M1 1.5 L10 1.5 L10 11.6 L7.5 12.5 L5 13.3 L2.5 14.2 L1 14.2 Z" fill="#fff"/><path d="M10.3 1.8 L10.3 11.7 L7.8 12.6 L5 13.5 L1.6 14.4" stroke="#50505c" fill="none" stroke-width="1"/><path d="M.8 1.2 V14.2" stroke="#6868d0" stroke-width="1.5"/><rect x="1.3" y="0" width="9.2" height="1.7" fill="#e3b524"/><path d="M2.5 2.4h1M4.6 2.4h1M6.7 2.4h1M8.8 2.4h1" stroke="#8a4a2a" stroke-width="1"/><path d="M3.5 5.5h4M3.5 7.5h4.8M3.5 9.5h4.8M3.5 11.5h1.8" stroke="#7a7a7a" stroke-width="1"/></svg><span class="nm">Certificados.aspx</span><span class="sz">12 KB</span><span class="tp">Arquivo ASPX</span><span class="dt">11/4/2014 13:59</span></div>
<div class="row" style="left:0;top:375px"><svg class="a" style="left:6px;top:1px" width="12" height="15" viewBox="0 0 12 15"><path d="M1 1.5 L10 1.5 L10 11.6 L7.5 12.5 L5 13.3 L2.5 14.2 L1 14.2 Z" fill="#fff"/><path d="M10.3 1.8 L10.3 11.7 L7.8 12.6 L5 13.5 L1.6 14.4" stroke="#50505c" fill="none" stroke-width="1"/><path d="M.8 1.2 V14.2" stroke="#6868d0" stroke-width="1.5"/><rect x="1.3" y="0" width="9.2" height="1.7" fill="#e3b524"/><path d="M2.5 2.4h1M4.6 2.4h1M6.7 2.4h1M8.8 2.4h1" stroke="#8a4a2a" stroke-width="1"/><path d="M3.5 5.5h4M3.5 7.5h4.8M3.5 9.5h4.8M3.5 11.5h1.8" stroke="#7a7a7a" stroke-width="1"/></svg><span class="nm">Config.aspx</span><span class="sz">26 KB</span><span class="tp">Arquivo ASPX</span><span class="dt">6/6/2014 14:39</span></div>
<div class="row" style="left:0;top:392px"><svg class="a" style="left:6px;top:1px" width="12" height="15" viewBox="0 0 12 15"><path d="M1 1.5 L10 1.5 L10 11.6 L7.5 12.5 L5 13.3 L2.5 14.2 L1 14.2 Z" fill="#fff"/><path d="M10.3 1.8 L10.3 11.7 L7.8 12.6 L5 13.5 L1.6 14.4" stroke="#50505c" fill="none" stroke-width="1"/><path d="M.8 1.2 V14.2" stroke="#6868d0" stroke-width="1.5"/><rect x="1.3" y="0" width="9.2" height="1.7" fill="#e3b524"/><path d="M2.5 2.4h1M4.6 2.4h1M6.7 2.4h1M8.8 2.4h1" stroke="#8a4a2a" stroke-width="1"/><path d="M3.5 5.5h4M3.5 7.5h4.8M3.5 9.5h4.8M3.5 11.5h1.8" stroke="#7a7a7a" stroke-width="1"/></svg><span class="nm">ConfigCertificado.aspx</span><span class="sz">8 KB</span><span class="tp">Arquivo ASPX</span><span class="dt">24/10/2013 14:53</span></div>
<div class="row" style="left:0;top:409px"><svg class="a" style="left:6px;top:1px" width="12" height="15" viewBox="0 0 12 15"><path d="M1 1.5 L10 1.5 L10 11.6 L7.5 12.5 L5 13.3 L2.5 14.2 L1 14.2 Z" fill="#fff"/><path d="M10.3 1.8 L10.3 11.7 L7.8 12.6 L5 13.5 L1.6 14.4" stroke="#50505c" fill="none" stroke-width="1"/><path d="M.8 1.2 V14.2" stroke="#6868d0" stroke-width="1.5"/><rect x="1.3" y="0" width="9.2" height="1.7" fill="#e3b524"/><path d="M2.5 2.4h1M4.6 2.4h1M6.7 2.4h1M8.8 2.4h1" stroke="#8a4a2a" stroke-width="1"/><path d="M3.5 5.5h4M3.5 7.5h4.8M3.5 9.5h4.8M3.5 11.5h1.8" stroke="#7a7a7a" stroke-width="1"/></svg><span class="nm">ConfigDanfe.aspx</span><span class="sz">11 KB</span><span class="tp">Arquivo ASPX</span><span class="dt">24/10/2013 14:53</span></div>
<div class="row" style="left:0;top:426px"><svg class="a" style="left:6px;top:1px" width="12" height="15" viewBox="0 0 12 15"><path d="M1 1.5 L10 1.5 L10 11.6 L7.5 12.5 L5 13.3 L2.5 14.2 L1 14.2 Z" fill="#fff"/><path d="M10.3 1.8 L10.3 11.7 L7.8 12.6 L5 13.5 L1.6 14.4" stroke="#50505c" fill="none" stroke-width="1"/><path d="M.8 1.2 V14.2" stroke="#6868d0" stroke-width="1.5"/><rect x="1.3" y="0" width="9.2" height="1.7" fill="#e3b524"/><path d="M2.5 2.4h1M4.6 2.4h1M6.7 2.4h1M8.8 2.4h1" stroke="#8a4a2a" stroke-width="1"/><path d="M3.5 5.5h4M3.5 7.5h4.8M3.5 9.5h4.8M3.5 11.5h1.8" stroke="#7a7a7a" stroke-width="1"/></svg><span class="nm">ConfigEmail.aspx</span><span class="sz">12 KB</span><span class="tp">Arquivo ASPX</span><span class="dt">24/10/2013 14:53</span></div>
<div class="row" style="left:0;top:443px"><svg class="a" style="left:6px;top:1px" width="12" height="15" viewBox="0 0 12 15"><path d="M1 1.5 L10 1.5 L10 11.6 L7.5 12.5 L5 13.3 L2.5 14.2 L1 14.2 Z" fill="#fff"/><path d="M10.3 1.8 L10.3 11.7 L7.8 12.6 L5 13.5 L1.6 14.4" stroke="#50505c" fill="none" stroke-width="1"/><path d="M.8 1.2 V14.2" stroke="#6868d0" stroke-width="1.5"/><rect x="1.3" y="0" width="9.2" height="1.7" fill="#e3b524"/><path d="M2.5 2.4h1M4.6 2.4h1M6.7 2.4h1M8.8 2.4h1" stroke="#8a4a2a" stroke-width="1"/><path d="M3.5 5.5h4M3.5 7.5h4.8M3.5 9.5h4.8M3.5 11.5h1.8" stroke="#7a7a7a" stroke-width="1"/></svg><span class="nm">ConfigParamDistribuicao.aspx</span><span class="sz">9 KB</span><span class="tp">Arquivo ASPX</span><span class="dt">24/10/2013 14:53</span></div>
<div class="row" style="left:0;top:460px"><svg class="a" style="left:6px;top:1px" width="12" height="15" viewBox="0 0 12 15"><path d="M1 1.5 L10 1.5 L10 11.6 L7.5 12.5 L5 13.3 L2.5 14.2 L1 14.2 Z" fill="#fff"/><path d="M10.3 1.8 L10.3 11.7 L7.8 12.6 L5 13.5 L1.6 14.4" stroke="#50505c" fill="none" stroke-width="1"/><path d="M.8 1.2 V14.2" stroke="#6868d0" stroke-width="1.5"/><rect x="1.3" y="0" width="9.2" height="1.7" fill="#e3b524"/><path d="M2.5 2.4h1M4.6 2.4h1M6.7 2.4h1M8.8 2.4h1" stroke="#8a4a2a" stroke-width="1"/><path d="M3.5 5.5h4M3.5 7.5h4.8M3.5 9.5h4.8M3.5 11.5h1.8" stroke="#7a7a7a" stroke-width="1"/></svg><span class="nm">ConsultaNFe.aspx</span><span class="sz">9 KB</span><span class="tp">Arquivo ASPX</span><span class="dt">24/10/2013 14:53</span></div>
</div>
<div class="track" style="left:781px;top:97px;width:16px;height:482px"></div>
<div class="sbtn" style="left:781px;top:97px;width:16px;height:16px"><div class="a" style="left:3px;top:4px;width:0;height:0;border:4px solid transparent;border-bottom:4px solid #000;border-top:none"></div></div>
<div class="sbtn" style="left:781px;top:113px;width:16px;height:114px"></div>
<div class="sbtn" style="left:781px;top:563px;width:16px;height:16px"><div class="a" style="left:3px;top:5px;width:0;height:0;border:4px solid transparent;border-top:4px solid #000;border-bottom:none"></div></div>
<div class="track" style="left:278px;top:579px;width:503px;height:16px"></div>
<div class="sbtn" style="left:278px;top:579px;width:16px;height:16px"><div class="a" style="left:4px;top:3px;width:0;height:0;border:4px solid transparent;border-right:4px solid #000;border-left:none"></div></div>
<div class="sbtn" style="left:294px;top:579px;width:411px;height:16px"></div>
<div class="sbtn" style="left:765px;top:579px;width:16px;height:16px"><div class="a" style="left:5px;top:3px;width:0;height:0;border:4px solid transparent;border-left:4px solid #000;border-right:none"></div></div>
<div class="a" style="left:781px;top:579px;width:16px;height:16px;background:#d4d0c8"></div>
<svg class="a" style="left:784px;top:582px" width="13" height="13" viewBox="0 0 13 13"><path d="M0 12 L12 0 M4 12 L12 4 M8 12 L12 8" stroke="#fff" stroke-width="1"/><path d="M1.2 12.4 L12.4 1.2 M5.2 12.4 L12.4 5.2 M9.2 12.4 L12.4 9.2" stroke="#808080" stroke-width="1.6"/></svg>
<div class="a" style="left:334px;top:256px;width:205px;height:298px;background:#d4d0c8;border:1px solid;border-color:#d4d0c8 #404040 #404040 #d4d0c8;box-shadow:inset 1px 1px 0 #fff, inset -1px -1px 0 #808080">
<div class="mi" style="top:2px"><b style="display:inline-block;transform:scaleX(1.08);transform-origin:0 0">A<u>b</u>rir</b></div>
<div class="mi" style="top:19px"><u>E</u>xplorar</div>
<div class="mi" style="top:36px">Pe<u>s</u>quisar...</div>
<div class="mi" style="top:53px">7-Zip</div>
<div class="mi" style="top:79px"><u>V</u>erificar vírus</div>
<div class="mi" style="top:96px;color:#808080;text-shadow:1px 1px 0 #fff">Mover para a <u>Q</u>uarentena</div>
<div class="mi" style="top:122px">Compartilha<u>m</u>ento e segurança...</div>
<div class="mi" style="top:148px">En<u>v</u>iar para</div>
<div class="mi" style="top:174px"><u>R</u>ecortar</div>
<div class="mi" style="top:191px"><u>C</u>opiar</div>
<div class="mi" style="top:217px">Criar a<u>t</u>alho</div>
<div class="mi" style="top:234px;background:#0a246a;color:#fff">E<u>x</u>cluir</div>
<div class="mi" style="top:251px">Re<u>n</u>omear</div>
<div class="mi" style="top:277px"><u>P</u>ropriedades</div>
<div class="sep" style="top:73px"></div>
<div class="sep" style="top:116px"></div>
<div class="sep" style="top:142px"></div>
<div class="sep" style="top:168px"></div>
<div class="sep" style="top:211px"></div>
<div class="sep" style="top:271px"></div>
<svg class="a" style="left:191px;top:57px" width="4" height="7" viewBox="0 0 4 7"><path d="M0 0 L4 3.5 L0 7Z" fill="#000"/></svg>
<svg class="a" style="left:191px;top:152px" width="4" height="7" viewBox="0 0 4 7"><path d="M0 0 L4 3.5 L0 7Z" fill="#000"/></svg>
<svg class="a" style="left:4px;top:81px" width="13" height="13" viewBox="0 0 13 13"><path d="M0 0 L3.2 0 L3.2 5 L8 0 L12 0 L3.2 9.5 L3.2 12 L0 12 Z" fill="#d20f26"/><path d="M0 0 L3.2 0 L3.2 5 L8 0 L12 0 L8.2 4 L0 4Z" fill="#f3a0a8" opacity=".8"/><path d="M6.3 6 L10.6 10.3" stroke="#111" stroke-width="2.2"/><path d="M12.3 7.3 L12.3 12.3 L7.3 12.3 Z" fill="#111"/></svg>
<svg class="a" style="left:4px;top:98px" width="14" height="14" viewBox="0 0 14 14"><g transform="translate(1,1)" fill="#fff" stroke="#fff"><path d="M0 0 L3.2 0 L3.2 5 L8 0 L12 0 L3.2 9.5 L3.2 12 L0 12 Z" stroke="none"/><path d="M6.3 6 L10.6 10.3" stroke-width="2.2"/><path d="M12.3 7.3 L12.3 12.3 L7.3 12.3 Z" stroke="none"/></g><g fill="#808080" stroke="#808080"><path d="M0 0 L3.2 0 L3.2 5 L8 0 L12 0 L3.2 9.5 L3.2 12 L0 12 Z" stroke="none"/><path d="M6.3 6 L10.6 10.3" stroke-width="2.2"/><path d="M12.3 7.3 L12.3 12.3 L7.3 12.3 Z" stroke="none"/></g></svg>
</div>
<div class="a" style="left:54px;top:70px;width:434px;height:30px;border:5px solid #000"></div>
<div class="a" style="left:274px;top:245px;width:85px;height:25px;border:5px solid #000"></div>
<div class="a" style="left:334px;top:487px;width:207px;height:24px;border:5px solid #000"></div>
</div>
</body></html>
